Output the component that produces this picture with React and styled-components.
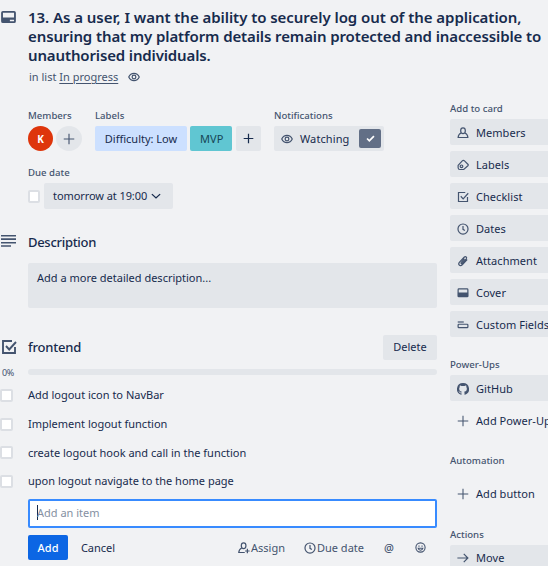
import React from "react";
import styled, { createGlobalStyle } from "styled-components";

const Global = createGlobalStyle`
  * { box-sizing: border-box; }
  body { margin: 0; overflow: hidden; background: #f1f2f4; }
  button, input { font: inherit; letter-spacing: inherit; }
`;

const Card = styled.div`
  width: 548px;
  height: 566px;
  overflow: hidden;
  background: #f1f2f4;
  color: #172b4d;
  font: 400 11px/16px "Noto Sans", "Liberation Sans", sans-serif;
  letter-spacing: 0;
  white-space: nowrap;
`;
const Header = styled.header`
  display: flex;
  height: 88px;
  padding-top: 8px;
`;
const Gutter = styled.div`
  flex: none;
  width: 28px;
  display: flex;
  color: #44546f;
  padding: ${(p) => p.$pad || "0"};
`;
const Title = styled.h1`
  margin: 0;
  font-size: 15px;
  line-height: 19px;
  font-weight: 600;
`;
const TitleLine = styled.span`
  display: block;
  letter-spacing: ${(p) => p.$ls || 0}px;
`;
const InList = styled.div`
  display: flex;
  align-items: center;
  gap: 10px;
  padding: 3px 0 0 1px;
  height: 21px;
  color: #44546f;
  a { color: inherit; text-decoration: underline; text-underline-offset: 2px; }
`;
const Columns = styled.div`
  display: grid;
  grid-template-columns: 437px 1fr;
  column-gap: 13px;
`;
const Main = styled.main`
  padding-top: 20px;
`;
const Side = styled.aside`
  width: 120px;
  padding-top: 13px;
`;
const Label = styled.h3`
  margin: 0;
  height: ${(p) => p.$h || 18}px;
  font-size: 9.6px;
  line-height: 15px;
  font-weight: 500;
  letter-spacing: ${(p) => p.$ls || 0}px;
  color: #44546f;
`;
const Meta = styled.div`
  display: flex;
  gap: 13px;
  padding-left: 28px;
  height: 57px;
`;
const Row = styled.div`
  display: flex;
  align-items: center;
  gap: ${(p) => p.$gap || 0}px;
`;
const Avatar = styled.div`
  width: ${(p) => (p.$add ? 26 : 25)}px;
  height: 25px;
  border-radius: 50%;
  display: grid;
  place-items: center;
  background: ${(p) => (p.$add ? "#e3e6ea" : "#de350b")};
  color: ${(p) => (p.$add ? "#44546f" : "#fff")};
  font-size: 10px;
  font-weight: 700;
`;
const Chip = styled.button`
  flex: none;
  width: ${(p) => p.$w}px;
  height: ${(p) => p.$h || 25}px;
  border: 0;
  border-radius: 2px;
  padding: ${(p) => p.$pad || "0"};
  display: flex;
  align-items: center;
  justify-content: ${(p) => (p.$pad ? "flex-start" : "center")};
  gap: ${(p) => p.$gap || 0}px;
  background: ${(p) => p.$bg || "#e3e6ea"};
  color: ${(p) => p.$color || "#172b4d"};
  font-weight: ${(p) => p.$weight || 400};
  letter-spacing: ${(p) => p.$ls ?? 0.1}px;
`;
const WatchTick = styled.span`
  width: 22px;
  height: 19px;
  margin-left: auto;
  border-radius: 2px;
  display: grid;
  place-items: center;
  background: #626f86;
  color: #fff;
`;
const WatchEye = styled.span`
  color: #44546f;
`;
const Due = styled.section`
  padding-left: 28px;
  height: 64px;
`;
const Box = styled.span`
  flex: none;
  width: ${(p) => p.$w || 12}px;
  height: 13px;
  border: 2px solid #dcdfe4;
  border-radius: 2px;
  background: #fff;
`;
const SectionHead = styled.div`
  display: flex;
  align-items: center;
  height: 26px;
`;
const Heading = styled.h2`
  margin: 0;
  flex: 1;
  font-size: 13px;
  line-height: 20px;
  font-weight: 500;
  letter-spacing: ${(p) => p.$ls || 0}px;
`;
const Description = styled.div`
  margin: 8px 0 26px 28px;
  height: 45px;
  padding: 7px 9px;
  border-radius: 2px;
  background: #e3e6ea;
`;
const Progress = styled.div`
  display: flex;
  align-items: center;
  height: 12px;
  margin-top: 6px;
  span { width: 26px; padding: 1px 0 0 2px; margin-right: 2px; font-size: 9px; letter-spacing: -0.4px; color: #44546f; }
  div { flex: 1; height: 6px; border-radius: 3px; background: #e3e6ea; }
`;
const Items = styled.ul`
  list-style: none;
  margin: 3px 0 0;
  padding: 0;
  height: 117px;
`;
const Item = styled.li`
  display: flex;
  align-items: center;
  height: 28.7px;
  gap: 15px;
`;
const Entry = styled.div`
  margin: 1px 0 7px 28px;
  height: 29px;
  border: 2px solid #388bff;
  border-radius: 2px;
  background: #fff;
  padding: 0 0 2px 7px;
  display: flex;
  align-items: center;
  color: #8590a2;
`;
const Caret = styled.i`
  width: 1px;
  height: 15px;
  margin-right: -1px;
  background: #172b4d;
`;
const Actions = styled.div`
  display: flex;
  align-items: center;
  height: 25px;
  padding-left: 28px;
  color: #44546f;
`;
const Tool = styled.span`
  display: flex;
  align-items: center;
  gap: 1px;
  margin-left: ${(p) => p.$ml}px;
  font-weight: ${(p) => p.$weight || 400};
`;
const SideButton = styled.button`
  width: 120px;
  height: 26px;
  margin: 0 0 6px;
  padding: ${(p) => p.$top ?? 1}px 0 0 7px;
  border: 0;
  border-radius: 2px;
  display: flex;
  align-items: center;
  gap: 7px;
  color: #172b4d;
  background: ${(p) => (p.$plain ? "transparent" : "#e3e6ea")};
  letter-spacing: ${(p) => p.$ls ?? 0.05}px;
  svg { color: #44546f; }
`;
const Group = styled.section`
  height: ${(p) => p.$h}px;
`;
const Svg = styled.svg`
  flex: none;
  display: block;
`;

const shapes = {
  card: <path fillRule="evenodd" fill="currentColor" stroke="none" d="M2 0h12a2 2 0 0 1 2 2v9a2 2 0 0 1-2 2H2a2 2 0 0 1-2-2V2a2 2 0 0 1 2-2Zm0 2v5h12V2ZM9.500 9.500V11H14V9.500Z" />,
  eye: <><path d="M1 8c3-6.500 11-6.500 14 0-3 6.500-11 6.500-14 0Z" /><circle cx="8" cy="8" r="2.500" /></>,
  plus: <path d="M8 1v14M1 8h14" />,
  down: <path d="m2.500 5.500 5.500 5 5.500-5" />,
  tick: <path d="m3 8 3.300 3.300L13 4.500" strokeWidth="2.500" />,
  check: <><path d="M11 2H2v12h12V8" /><path d="m5 7 3.200 3.500L15 3" /></>,
  user: <><ellipse cx="8" cy="5" rx="3.100" ry="3.800" /><path d="M5.400 8.100C3 9.200 1.700 10.800 1.500 14h13c-.2-3.200-1.500-4.800-3.900-5.900" /></>,
  assign: <><ellipse cx="7.500" cy="5" rx="3.100" ry="3.800" /><path d="M5 8.100C2.600 9.200 1.300 10.800 1 14h8M12.500 9v6M9.500 12h6" /></>,
  tag: <><path d="m1.500 8.500 5.500-6c1-1 2-1 3 0l4.500 4.500c.7.700.7 1.300 0 2l-5.500 5H4c-1.500 0-2.500-1-2.500-2.500Z" /><circle cx="6" cy="9.800" r="1.800" /></>,
  clock: <><circle cx="8" cy="8" r="6.700" /><path d="M8 4v4.500l2.500 1.500" /></>,
  clip: <path d="m13.500 6-6.500 7c-3 3-6.300-.5-3.600-3.500L9.500 3c2-2 4.500.2 2.600 2.400L7 11c-1 1-2.300 0-1.300-1.200L10 5" />,
  cover: <><rect x="1.500" y="2.500" width="13" height="10.500" rx="1" /><path d="M2 8h12v4.500H2Z" fill="currentColor" /></>,
  fields: <><path d="M1 4h8" /><rect x="1.500" y="7" width="13" height="4.500" rx="1" /></>,
  arrow: <path d="M.5 8h14M9 2.500 14.500 8 9 13.500" />,
  smile: <><circle cx="8" cy="8" r="6.700" /><path d="M4.500 9c1 4 6 4 7 0ZM5.800 5v2M10.200 5v2" /></>,
  github: <path fill="currentColor" stroke="none" d="M8 0a8 8 0 0 0-2.530 15.590c.4.070.55-.17.55-.38v-1.490c-2.010.37-2.530-.49-2.690-.94-.09-.23-.48-.94-.82-1.130-.28-.15-.68-.52-.01-.53.63-.01 1.080.58 1.230.82.72 1.210 1.870.87 2.330.66.07-.52.28-.87.51-1.070-1.780-.2-3.640-.89-3.640-3.950 0-.87.31-1.590.82-2.150-.08-.2-.36-1.020.08-2.120 0 0 .67-.21 2.200.82a7.600 7.600 0 0 1 4 0c1.530-1.040 2.200-.82 2.200-.82.44 1.100.16 1.920.08 2.120.51.56.82 1.270.82 2.150 0 3.070-1.870 3.750-3.650 3.950.29.25.54.73.54 1.480v2.200c0 .21.15.46.55.38A8 8 0 0 0 8 0Z" />,
};
const Icon = ({ name, size = 12, h, sw = 1.6, box = "0 0 16 16" }) => (
  <Svg width={size} height={h || size} viewBox={box} fill="none" stroke="currentColor" strokeWidth={sw}>{shapes[name]}</Svg>
);

const checklist = [
  "Add logout icon to NavBar",
  "Implement logout function",
  "create logout hook and call in the function",
  "upon logout navigate to the home page",
];
const addTo = [
  ["user", "Members"], ["tag", "Labels"], ["check", "Checklist"], ["clock", "Dates"],
  ["clip", "Attachment"], ["cover", "Cover"], ["fields", "Custom Fields"],
];

export default function App() {
  return (
    <Card>
      <Global />
      <Header>
        <Gutter $pad="3px 0 0 1px"><Icon name="card" size={15} h={12} box="0 0 16 13" /></Gutter>
        <div>
          <Title>
            <TitleLine $ls={-0.05}>13. As a user, I want the ability to securely log out of the application,</TitleLine>
            <TitleLine $ls={-0.11}>ensuring that my platform details remain protected and inaccessible to</TitleLine>
            <TitleLine $ls={-0.14}>unauthorised individuals.</TitleLine>
          </Title>
          <InList><span>in list <a>In progress</a></span><Icon name="eye" /></InList>
        </div>
      </Header>
      <Columns>
        <Main>
          <Meta>
            <div>
              <Label>Members</Label>
              <Row $gap={3}>
                <Avatar>K</Avatar>
                <Avatar $add><Icon name="plus" sw={1.5} /></Avatar>
              </Row>
            </div>
            <div>
              <Label>Labels</Label>
              <Row $gap={4}>
                <Row $gap={3}>
                  <Chip $w={92} $bg="#cce0ff" $ls={0}>Difficulty: Low</Chip>
                  <Chip $w={42} $bg="#60c6d2" $color="#164555" $pad="0 0 0 10px">MVP</Chip>
                </Row>
                <Chip $w={25}><Icon name="plus" size={11} sw={1.8} /></Chip>
              </Row>
            </div>
            <div>
              <Label>Notifications</Label>
              <Chip $w={110} $pad="0 3px 0 7px" $gap={7}>
                <WatchEye><Icon name="eye" /></WatchEye>Watching<WatchTick><Icon name="tick" size={11} /></WatchTick>
              </Chip>
            </div>
          </Meta>
          <Due>
            <Label>Due date</Label>
            <Row $gap={4}>
              <Box />
              <Chip $w={129} $h={26} $pad="0 0 0 9px" $gap={3} $ls={-0.08}>tomorrow at 19:00<Icon name="down" sw={1.8} /></Chip>
            </Row>
          </Due>
          <SectionHead>
            <Gutter $pad="0 0 2px 1px">
              <Svg width="15" height="12" viewBox="0 0 15 12" fill="currentColor"><path d="M0 0h15v1.500H0zM0 3.300h15v1.800H0zM0 7h15v1.500H0zM0 10.300h10v1.500H0z" /></Svg>
            </Gutter>
            <Heading $ls={-0.3}>Description</Heading>
          </SectionHead>
          <Description>Add a more detailed description...</Description>
          <SectionHead>
            <Gutter $pad="0 0 0 1px"><Icon name="check" size={16} sw={1.9} /></Gutter>
            <Heading $ls={-0.2}>frontend</Heading>
            <Chip $w={54} $ls={0}>Delete</Chip>
          </SectionHead>
          <Progress><span>0%</span><div /></Progress>
          <Items>
            {checklist.map((text) => <Item key={text}><Box $w={13} />{text}</Item>)}
          </Items>
          <Entry><Caret />Add an item</Entry>
          <Actions>
            <Chip $w={40} $bg="#0c66e4" $color="#fff" $weight={500}>Add</Chip>
            <Chip $w={60} $bg="transparent" $ls={0}>Cancel</Chip>
            <Tool $ml={110}><Icon name="assign" />Assign</Tool>
            <Tool $ml={19}><Icon name="clock" />Due date</Tool>
            <Tool $ml={20} $weight={500}>@</Tool>
            <Tool $ml={21}><Icon name="smile" size={11} /></Tool>
          </Actions>
        </Main>
        <Side>
          <Group $h={256}>
            <Label>Add to card</Label>
            {addTo.map(([icon, text]) => <SideButton key={text}><Icon name={icon} />{text}</SideButton>)}
          </Group>
          <Group $h={96}>
            <Label>Power-Ups</Label>
            <SideButton><Icon name="github" />GitHub</SideButton>
            <SideButton $plain><Icon name="plus" sw={1.4} />Add Power-Ups</SideButton>
          </Group>
          <Group $h={74}>
            <Label $h={27}>Automation</Label>
            <SideButton $plain><Icon name="plus" sw={1.4} />Add button</SideButton>
          </Group>
          <Group $h={50}>
            <Label>Actions</Label>
            <SideButton $top={0}><Icon name="arrow" />Move</SideButton>
          </Group>
        </Side>
      </Columns>
    </Card>
  );
}
